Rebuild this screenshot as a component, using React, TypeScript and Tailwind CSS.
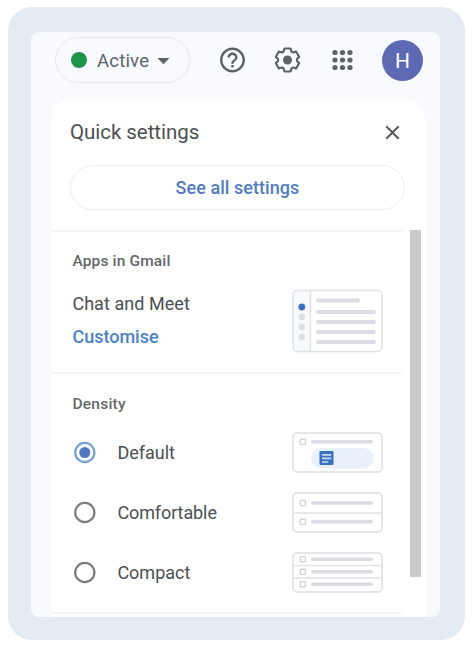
import React from 'react'
import { MdHelpOutline, MdArrowDropDown, MdClose } from 'react-icons/md'

const options = [
  { name: 'Default', tracking: 'tracking-normal' },
  { name: 'Comfortable', tracking: 'tracking-[-0.1px]' },
  { name: 'Compact', tracking: 'tracking-normal' },
]

const SettingsIcon = () => (
  <svg width="30" height="30" viewBox="-12.4 -12 24 24" fill="none" stroke="#5f6368">
    <path
      d="M-2.5-9.2h5l.6 2.4 1.4.8L6.9-6.8l2.4 4.3L7.6-.8V.8L9.3 2.5 6.9 6.8 4.5 6 3.1 6.8 2.5 9.2h-5L-3.1 6.8-4.5 6-6.9 6.8-9.3 2.5-7.6.8V-.8L-9.3-2.5-6.9-6.8-4.5-6-3.1-6.8z"
      strokeWidth="1.7"
      strokeLinejoin="round"
    />
    <circle r="3.6" fill="#5f6368" stroke="none" />
  </svg>
)

const AppsIcon = () => (
  <svg width="30" height="30" viewBox="-0.5 0 30 30" fill="#5f6368">
    {[7.5, 15, 22.5].map((y) => [7.5, 15, 22.5].map((x) => (
      <circle key={`${x}-${y}`} cx={x} cy={y} r="2.6" />
    )))}
  </svg>
)

const LayoutPreview = () => (
  <svg width="92" height="64" viewBox="-0.5 0 92 64" fill="none">
    <path d="M19 2H6a4 4 0 0 0-4 4v52a4 4 0 0 0 4 4h13z" fill="#f8f9fd" />
    <rect x="1.5" y="1.5" width="89" height="61" rx="4" stroke="#dfe2e9" strokeWidth="1.5" />
    <path d="M19 2v60" stroke="#dfe2e9" strokeWidth="1.4" />
    <circle cx="10.3" cy="18" r="3.4" fill="#3b71c2" />
    {[28, 38, 48].map((y) => <circle key={y} cx="10.3" cy={y} r="3.2" fill="#dadce3" />)}
    <path d="M26.5 11.5h40M26.5 23h56M26.5 33h56M26.5 43h56M26.5 53h56" stroke="#dadde3" strokeWidth="3.8" strokeLinecap="round" />
  </svg>
)

const DensityPreview = ({ name }: { name: string }) => {
  const rows = name === 'Default' ? [10.3] : name === 'Comfortable' ? [11.5, 30.3] : [7.7, 20.3, 32.7]
  const lines = name === 'Default' ? [] : name === 'Comfortable' ? [21.5] : [14, 26.5]

  return (
    <svg width="92" height="42" viewBox="-0.5 -0.5 92 42" fill="none">
      <rect x="1.5" y="1.5" width="89" height="39" rx="4" stroke="#dadee5" strokeWidth="1.5" />
      {lines.map((y) => <path key={y} d={`M2 ${y}h88`} stroke="#dfe2e7" strokeWidth="1.4" />)}
      {rows.map((y) => (
        <g key={y} stroke="#dadce2">
          <rect x="8.8" y={y - 2.6} width="5.2" height="5.2" rx="0.6" stroke="#d2d4d8" strokeWidth="1.4" />
          <path d={`M21.3 ${y}h58.5`} strokeWidth="3.6" strokeLinecap="round" />
        </g>
      ))}
      {name === 'Default' && (
        <>
          <rect x="19.5" y="16.5" width="62.5" height="20.5" rx="10.2" fill="#e8f0fc" />
          <rect x="28" y="19.5" width="14" height="14" rx="1.2" fill="#3b71c2" />
          <path d="M30.5 23.3h9.2M30.5 26.8h9.2M30.5 30.5h6.2" stroke="#c9dcf5" strokeWidth="1.7" />
        </>
      )}
    </svg>
  )
}

const Header = () => (
  <div className="flex h-[67px] items-start pl-6 pt-[5px]">
    <div className="flex h-[46px] w-[135px] items-center rounded-full border-[1.5px] border-[#e6e8eb] pl-[15px]">
      <div className="h-4 w-4 rounded-full bg-[#1e9447]" />
      <span className="ml-[10px] mt-[3px] w-[54px] text-[18.5px] tracking-[0.2px] text-[#5f6368]">Active</span>
      <MdArrowDropDown size={29} className="-ml-[2px] shrink-0 text-[#5f6368]" />
    </div>
    <div className="ml-[27px] flex h-[46px] items-center gap-[25px]">
      <MdHelpOutline size={30} viewBox="-0.4 0 24 24" color="#5f6368" />
      <SettingsIcon />
      <AppsIcon />
      <div className="flex h-[41px] w-[41px] items-center justify-center rounded-full bg-[#5d6ab3] pt-[3px] text-[21px] text-white">H</div>
    </div>
  </div>
)

const App = () => {
  const [density, setDensity] = React.useState('Default')

  return (
    <div className="h-[646px] w-[472px] bg-white pl-2 pt-[7px] font-['Roboto',sans-serif] text-[#4d5053]">
      <div className="h-[633px] w-[457px] rounded-3xl bg-[#e4ebf3] pl-[23px] pt-[25px]">
        <div className="h-[585px] w-[409px] overflow-hidden rounded-lg bg-[#f8fafe]">
          <Header />
          <div className="ml-[21px] h-[518px] w-[373px] rounded-t-[20px] bg-white">
            <div className="flex h-[66px] items-center justify-between pl-[18px] pr-[21px]">
              <h1 className="text-[20.5px] tracking-[-0.05px]">Quick settings</h1>
              <MdClose size={24} viewBox="-0.5 -0.5 24 24" className="text-[#5b5b5b]" />
            </div>
            <button className="ml-[18px] flex h-[45px] w-[335px] items-center justify-center rounded-full border-[1.5px] border-[#ebeeef] text-[18px] font-medium tracking-[0.05px] text-[#527cc4]">
              See all settings
            </button>

            <div className="mt-5 flex">
              <div className="w-[350px]">
                <div className="h-[142px] border-t-2 border-[#f3f4f5] pl-[20.4px]">
                  <h2 className="pt-[17px] text-[15.5px] font-medium leading-6 tracking-[0.15px] text-[#66686b]">Apps in Gmail</h2>
                  <div className="flex">
                    <div className="w-[219px] pt-[15px] text-[18px]">
                      <p className="leading-8 tracking-[0.05px]">Chat and Meet</p>
                      <p className="pt-px font-medium leading-8 text-[#4b82c9]">Customise</p>
                    </div>
                    <div className="mt-4">
                      <LayoutPreview />
                    </div>
                  </div>
                </div>

                <div className="h-[240px] border-t-2 border-[#f3f4f5] pl-[20.4px]">
                  <h2 className="pt-[18px] text-[15.5px] font-medium leading-6 tracking-[0.25px] text-[#66686b]">Density</h2>
                  <div className="mt-[6px]">
                    {options.map(({ name, tracking }) => (
                      <div key={name} className="flex h-[60px] cursor-pointer items-center" onClick={() => setDensity(name)}>
                        <svg width="25" height="25" viewBox="0 0 25 25" fill="none">
                          <circle cx="12.8" cy="12.5" r="9.6" stroke={density === name ? '#779fd8' : '#7b7c7e'} strokeWidth="2.2" />
                          {density === name && <circle cx="12.8" cy="12.5" r="5.5" fill="#4d7bc2" />}
                        </svg>
                        <span className={`ml-5 w-[174px] text-[18px] ${tracking}`}>{name}</span>
                        <DensityPreview name={name} />
                      </div>
                    ))}
                  </div>
                </div>
                <div className="border-t-2 border-[#f3f4f5]" />
              </div>
              <div className="ml-2 h-[347px] w-[11px] bg-[#cbcbcb]" />
            </div>
          </div>
        </div>
      </div>
    </div>
  )
}

export default App
